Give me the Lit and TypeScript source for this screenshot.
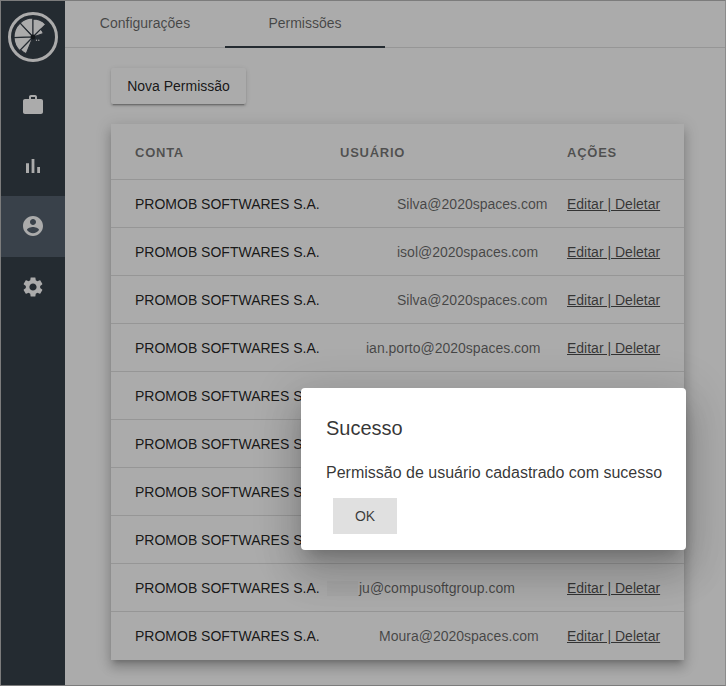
import { LitElement, html, css, svg } from "lit";
import { customElement } from "lit/decorators.js";

const wedge = (a0: number, a1: number, r: number) => {
  const cx = 33, cy = 37;
  const p = (a: number) => {
    const t = (a * Math.PI) / 180;
    return `${(cx + r * Math.sin(t)).toFixed(2)} ${(cy - r * Math.cos(t)).toFixed(2)}`;
  };
  return `M${cx} ${cy}L${p(a0)}A${r} ${r} 0 0 1 ${p(a1)}Z`;
};

const ROWS = [
  { email: "Silva@2020spaces.com", pad: 57 },
  { email: "isol@2020spaces.com", pad: 57 },
  { email: "Silva@2020spaces.com", pad: 57 },
  { email: "ian.porto@2020spaces.com", pad: 26 },
  { email: "", pad: 0 },
  { email: "", pad: 0 },
  { email: "", pad: 0 },
  { email: "", pad: 0 },
  { email: "ju@compusoftgroup.com", pad: 19 },
  { email: "Moura@2020spaces.com", pad: 39 },
];

const ICONS = {
  work: "M20 6h-4V4c0-1.11-.89-2-2-2h-4c-1.11 0-2 .89-2 2v2H4c-1.11 0-1.99.89-1.99 2L2 19c0 1.11.89 2 2 2h16c1.11 0 2-.89 2-2V8c0-1.11-.89-2-2-2zm-6 0h-4V4h4v2z",
  chart: "M5 9.2h3V19H5zM10.6 5h2.8v14h-2.8zm5.6 8H19v6h-2.8z",
  account: "M12 2C6.48 2 2 6.48 2 12s4.48 10 10 10 10-4.48 10-10S17.52 2 12 2zm0 3c1.66 0 3 1.34 3 3s-1.34 3-3 3-3-1.34-3-3 1.34-3 3-3zm0 14.2c-2.5 0-4.71-1.28-6-3.22.03-1.99 4-3.08 6-3.08 1.99 0 5.97 1.09 6 3.08-1.29 1.94-3.5 3.22-6 3.22z",
  settings: "M19.14 12.94c.04-.3.06-.61.06-.94 0-.32-.02-.64-.07-.94l2.03-1.58c.18-.14.23-.41.12-.61l-1.92-3.32c-.12-.22-.37-.29-.59-.22l-2.39.96c-.5-.38-1.03-.7-1.62-.94l-.36-2.54c-.04-.24-.24-.41-.48-.41h-3.84c-.24 0-.43.17-.47.41l-.36 2.54c-.59.24-1.13.57-1.62.94l-2.39-.96c-.22-.08-.47 0-.59.22L2.74 8.87c-.12.21-.08.47.12.61l2.03 1.58c-.05.3-.09.63-.09.94s.02.64.07.94l-2.03 1.58c-.18.14-.23.41-.12.61l1.92 3.32c.12.22.37.29.59.22l2.39-.96c.5.38 1.03.7 1.62.94l.36 2.54c.05.24.24.41.48.41h3.84c.24 0 .44-.17.47-.41l.36-2.54c.59-.24 1.13-.56 1.62-.94l2.39.96c.22.08.47 0 .59-.22l1.92-3.32c.12-.22.07-.47-.12-.61l-2.01-1.58zM12 15.6c-1.98 0-3.6-1.62-3.6-3.6s1.62-3.6 3.6-3.6 3.6 1.62 3.6 3.6-1.62 3.6-3.6 3.6z",
};

@customElement("app-root")
export class AppRoot extends LitElement {
  static styles = css`
    :host {
      display: block;
      position: relative;
      box-sizing: border-box;
      width: 726px;
      height: 686px;
      overflow: hidden;
      border: 1px solid #7c7c7c;
      border-right-color: #8c8c8c;
      background: #fff;
      font-family: "Liberation Sans", Arial, sans-serif;
      font-size: 14px;
    }
    .shell { display: flex; height: 100%; }
    .side { width: 64px; flex: none; background: #37404a; color: #fff; }
    .logo { display: flow-root; height: 73px; }
    .logo svg { display: block; margin-left: -1px; margin-top: -1px; }
    .nav { height: 61px; box-sizing: border-box; padding-top: 19px; display: flex; align-items: flex-start; justify-content: center; }
    .nav.up { padding-top: 18px; }
    .nav.active { background: #55626f; }
    .nav svg { width: 24px; height: 24px; fill: #fff; display: block; }
    .main { flex: 1; min-width: 0; }
    .tabs { display: flex; height: 47px; box-sizing: border-box; border-bottom: 1px solid #e0e0e0; }
    .tab {
      width: 160px; height: 47px; box-sizing: border-box; padding-bottom: 3px;
      display: flex; align-items: center; justify-content: center;
      color: rgba(0, 0, 0, 0.6);
    }
    .tab.active { border-bottom: 2px solid #37404a; padding-bottom: 1px; }
    .content { padding: 20px 0 0 46px; }
    .btn {
      display: block; width: 135px; height: 36px; box-sizing: border-box; padding: 0;
      border: 0; border-radius: 2px; background: #fff;
      font: inherit; color: rgba(0, 0, 0, 0.87);
      box-shadow: 0 3px 1px -2px rgba(0,0,0,.2), 0 2px 2px 0 rgba(0,0,0,.14), 0 1px 5px 0 rgba(0,0,0,.12);
    }
    .card {
      width: 573px; margin-top: 20px; background: #fff;
      box-shadow: 0 5px 5px -3px rgba(0,0,0,.2), 0 8px 10px 1px rgba(0,0,0,.14), 0 3px 14px 2px rgba(0,0,0,.12);
    }
    .row {
      display: grid; grid-template-columns: 229px 227px 1fr; align-items: center;
      height: 48px; box-sizing: border-box; border-bottom: 1px solid #e0e0e0;
    }
    .row:last-child { border-bottom: 0; }
    .row.head { height: 56px; padding-top: 1px; font-weight: 700; font-size: 13px; letter-spacing: 0.75px; color: rgba(0,0,0,.54); }
    .row > :first-child { padding-left: 24px; }
    .acct { color: rgba(0,0,0,.87); white-space: nowrap; }
    .email { color: rgba(0,0,0,.6); white-space: nowrap; }
    .acts { color: rgba(0,0,0,.7); text-decoration: underline; white-space: nowrap; }
    .overlay { position: absolute; inset: 0; background: rgba(0,0,0,.33); }
    .patch { position: absolute; left: 326px; top: 580px; width: 31px; height: 15px; background: #a6a6a6; }
    .dialog {
      position: absolute; left: 300px; top: 387px; width: 385px; height: 162px;
      box-sizing: border-box; padding: 24px 24px 16px 25px;
      background: #fff; border-radius: 4px; color: rgba(0,0,0,.8);
      box-shadow: 0 11px 15px -7px rgba(0,0,0,.2), 0 24px 38px 3px rgba(0,0,0,.14), 0 9px 46px 8px rgba(0,0,0,.12);
    }
    .title { font-size: 20px; line-height: 32px; }
    .msg { font-size: 16px; line-height: 24px; margin-top: 17px; white-space: nowrap; }
    .ok {
      display: block; width: 64px; height: 36px; margin: 13px 0 0 7px; padding: 0;
      border: 0; background: #e0e0e0; font: inherit; color: rgba(0,0,0,.75);
    }
  `;

  private nav(d: string, cls = "") {
    return html`<div class="nav ${cls}"><svg viewBox="0 0 24 24"><path d=${d}></path></svg></div>`;
  }

  render() {
    return html`
      <div class="shell">
        <aside class="side">
          <div class="logo">
            <svg width="66" height="74" viewBox="0 0 66 74">
              <circle cx="33" cy="37" r="23.5" fill="none" stroke="#fff" stroke-width="3"></circle>
              ${[
                wedge(-43, 0, 19),
                wedge(0, 45, 18),
                wedge(45, 72, 11),
                wedge(-92, -43, 19),
                wedge(-136, -92, 19),
                wedge(-158, -136, 18),
              ].map((d) => svg`<path d=${d} fill="#fff" stroke="#37404a" stroke-width="1.1" stroke-linejoin="round"></path>`)}
              <circle cx="33" cy="37" r="2.4" fill="#1c2126"></circle>
              <circle cx="36.5" cy="40.2" r=".7" fill="#fff"></circle>
              <circle cx="38.8" cy="40.2" r=".7" fill="#fff"></circle>
            </svg>
          </div>
          ${this.nav(ICONS.work)}
          ${this.nav(ICONS.chart)}
          ${this.nav(ICONS.account, "active up")}
          ${this.nav(ICONS.settings, "up")}
        </aside>
        <main class="main">
          <div class="tabs">
            <div class="tab">Configurações</div>
            <div class="tab active">Permissões</div>
          </div>
          <div class="content">
            <button class="btn">Nova Permissão</button>
            <div class="card">
              <div class="row head"><div>CONTA</div><div>USUÁRIO</div><div>AÇÕES</div></div>
              ${ROWS.map(
                (r) => html`<div class="row">
                  <div class="acct">PROMOB SOFTWARES S.A.</div>
                  <div class="email" style="padding-left:${r.pad}px">${r.email}</div>
                  <div class="acts">Editar | Deletar</div>
                </div>`
              )}
            </div>
          </div>
        </main>
      </div>
      <div class="overlay"></div>
      <div class="patch"></div>
      <div class="dialog">
        <div class="title">Sucesso</div>
        <div class="msg">Permissão de usuário cadastrado com sucesso</div>
        <button class="ok">OK</button>
      </div>
    `;
  }
}
